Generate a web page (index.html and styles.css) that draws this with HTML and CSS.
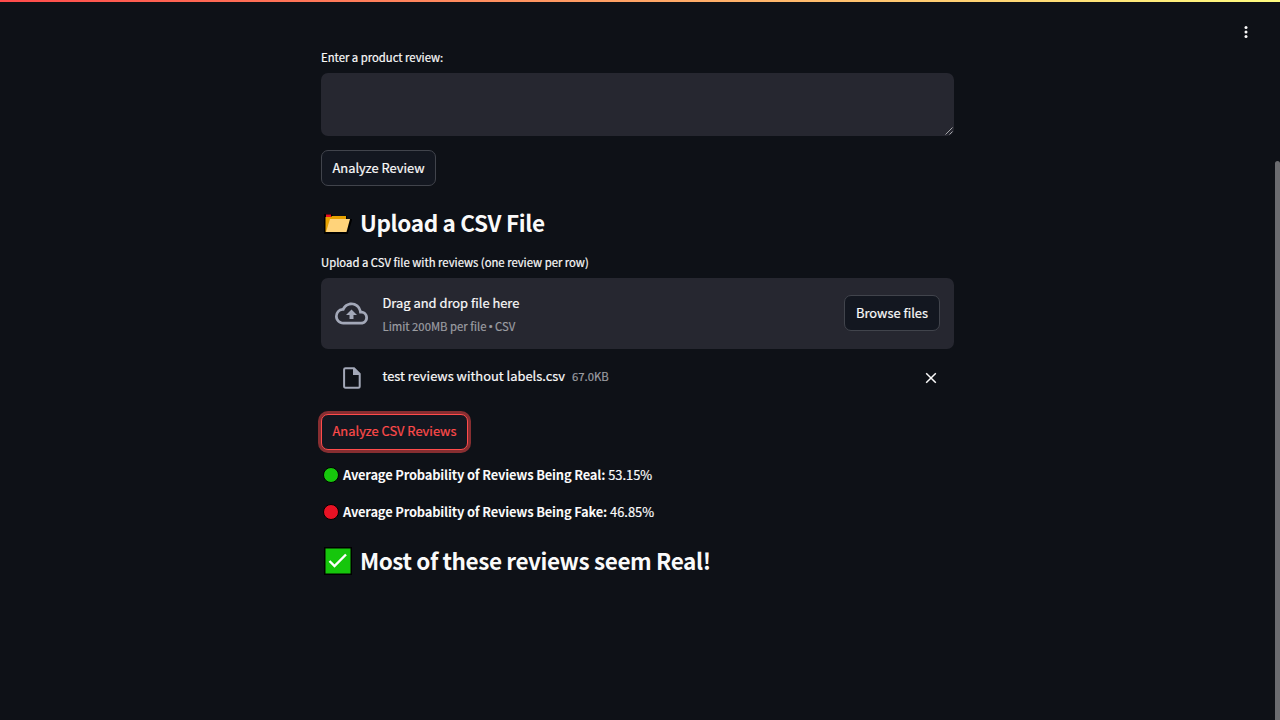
FILE: index.html
```html
<!DOCTYPE html>
<html lang="en">
<head>
<meta charset="utf-8">
<title>Product review analyzer</title>
<link rel="stylesheet" href="styles.css">
</head>
<body>
<div class="decoration"></div>
<svg class="menu" viewBox="0 0 4 12" aria-label="Menu"><circle cx="2" cy="1.6" r="1.5"/><circle cx="2" cy="6" r="1.5"/><circle cx="2" cy="10.4" r="1.5"/></svg>
<div class="scrollbar"></div>
<main class="content">
  <label class="label label-review" for="review"><span>Enter a product review:</span></label>
  <div class="review-box">
    <textarea class="review" id="review"></textarea>
    <svg class="grip" viewBox="0 0 8 8"><path d="M.5 7.500 7.500 .5M4.500 7.500 7.500 4.500"/></svg>
  </div>
  <button class="button button-review"><span>Analyze Review</span></button>
  <h2 class="heading heading-upload">
    <svg class="folder" viewBox="0 0 28 24"><path d="M1 3H7L9 5H22V8H27L23 21H1Z" fill="#000" stroke="#000" stroke-width="2"/><path d="M2 5V2.500H7V5Z" fill="#e81224"/><path d="M1.500 5H7L8 4H22V20H1.500Z" fill="#e8a200"/><path d="M6 7H26L22.500 20H2Z" fill="#ffd37a"/></svg>
    <span>Upload a CSV File</span>
  </h2>
  <div class="label label-upload"><span>Upload a CSV file with reviews (one review per row)</span></div>
  <section class="dropzone">
    <svg class="cloud" viewBox="0 0 24 24"><path d="M19.350 10.040A7.490 7.490 0 0 0 12 4C9.110 4 6.600 5.640 5.350 8.040A5.994 5.994 0 0 0 0 14c0 3.310 2.690 6 6 6h13c2.760 0 5-2.240 5-5 0-2.640-2.050-4.780-4.650-4.960zM19 18H6c-2.210 0-4-1.790-4-4 0-2.050 1.530-3.760 3.560-3.970l1.070-.11.5-.95A5.469 5.469 0 0 1 12 6c2.620 0 4.880 1.860 5.390 4.430l.3 1.500 1.530.11A2.980 2.980 0 0 1 22 15c0 1.650-1.350 3-3 3zM8 13h2.550v3h2.900v-3H16l-4-4z"/></svg>
    <div class="instructions">
      <div class="drag"><span>Drag and drop file here</span></div>
      <div class="limit"><span>Limit 200MB per file <span class="bullet">•</span> CSV</span></div>
    </div>
    <button class="button button-browse"><span>Browse files</span></button>
  </section>
  <div class="file">
    <svg class="file-icon" viewBox="0 0 18 22"><path d="M2.500 1.200H11L16.700 7V19.300Q16.700 20.800 15.200 20.800H2.500Q1.100 20.800 1.100 19.300V2.600Q1.100 1.200 2.500 1.200Z" fill="none" stroke="#a3a8b8" stroke-width="2"/><path d="M10 1H11.500L17 6.700V8H10Z" fill="#a3a8b8"/></svg>
    <div class="file-name"><span>test reviews without labels.csv</span></div>
    <div class="file-size"><span>67.0KB</span></div>
    <svg class="close" viewBox="0 0 12 12"><path d="M1.200 1.200 10.800 10.800M10.800 1.200 1.200 10.800"/></svg>
  </div>
  <button class="button button-csv"><span>Analyze CSV Reviews</span></button>
  <p class="result"><i class="dot dot-real"></i><b>Average Probability of Reviews Being Real:</b><span>53.15%</span></p>
  <p class="result"><i class="dot dot-fake"></i><b>Average Probability of Reviews Being Fake:</b><span>46.85%</span></p>
  <h2 class="heading heading-verdict">
    <svg class="check" viewBox="0 0 28 28"><path d="M0 0H28V28H0Z" fill="#000"/><path d="M1.500 1.500H26.500V26.500H1.500Z" fill="#16c60c"/><path d="M5.500 14 10.500 19 22 7.500" fill="none" stroke="#fff" stroke-width="2.400"/></svg>
    <span>Most of these reviews seem Real!</span>
  </h2>
</main>
</body>
</html>
```
FILE: styles.css
```css
* { box-sizing: border-box; }
body {
  margin: 0;
  height: 720px;
  overflow: hidden;
  background: #0e1117;
  color: #fafafa;
  font-family: "Noto Sans CJK SC", sans-serif;
  font-size: 12.9px;
}
.decoration {
  position: absolute;
  inset: 0 0 auto;
  height: 2px;
  background: linear-gradient(90deg, #ff4b4b, #fffd80);
}
.menu { position: absolute; left: 1244px; top: 26px; width: 4px; height: 12px; fill: #fafafa; }
.scrollbar { position: absolute; left: 1275px; top: 161px; width: 5px; height: 570px; border-radius: 3px; background: #6b6c70; }
.content {
  display: flex;
  flex-direction: column;
  align-items: flex-start;
  width: 633px;
  margin-left: 321px;
  padding-top: 48px;
  white-space: nowrap;
}
.label { display: flex; align-items: center; height: 20px; padding-bottom: 2px; font-size: 11.3px; -webkit-text-stroke: .2px; }
.review-box { position: relative; height: 63px; margin: 5px 0 14px; }
.review {
  display: block;
  width: 633px;
  height: 63px;
  border: 0;
  border-radius: 7px;
  background: #262730;
  color: inherit;
  resize: none;
}
.grip { position: absolute; right: 1px; bottom: 1px; width: 8px; height: 8px; fill: none; stroke: #c4c5c8; stroke-width: .8; }
.button {
  display: flex;
  align-items: center;
  justify-content: center;
  height: 36px;
  padding: 0 0 2px;
  border: 1px solid #41444c;
  border-radius: 7px;
  background: #131720;
  color: #fafafa;
  font: inherit;
  -webkit-text-stroke: .2px;
}
.button-review { width: 115px; }
.heading { display: flex; align-items: center; height: 40px; margin: 0; font-size: 22.5px; font-weight: 700; }
.heading span { margin-top: -3px; }
.heading-upload { margin-top: 18px; letter-spacing: -.36px; }
.heading-upload span { margin-top: -5px; }
.folder { width: 28px; height: 24px; margin: 0 8.500px 0 2.500px; }
.label-upload { margin: 9px 0 5px; }
.dropzone {
  display: flex;
  align-items: center;
  width: 633px;
  height: 71px;
  padding: 0 14px;
  border-radius: 7px;
  background: #262730;
}
.cloud { width: 33px; height: 33px; margin-right: 14.500px; fill: #a3a8b8; }
.instructions { flex: 1; }
.drag { display: flex; align-items: center; height: 24px; -webkit-text-stroke: .2px; }
.limit { display: flex; align-items: center; height: 22px; font-size: 11.3px; color: #9c9da2; -webkit-text-stroke: .2px; }
.bullet { margin: 0 -.7px; font-family: "Open Sans", sans-serif; font-size: 13px; line-height: 1; }
.button-browse { width: 96px; margin-bottom: 1px; }
.file { display: flex; align-items: center; width: 633px; height: 36px; margin: 11px 0 18px; padding: 0 17px 0 22px; }
.file-icon { width: 18px; height: 22px; margin-right: 21.500px; }
.file-name { margin-top: -5px; -webkit-text-stroke: .2px; }
.file-size { margin: -4px 0 0 7px; font-size: 11.3px; color: #9c9da2; -webkit-text-stroke: .2px; }
.close { width: 12px; height: 12px; margin-left: auto; fill: none; stroke: #fafafa; stroke-width: 1.500; }
.button-csv { width: 147px; padding-bottom: 3px; border-color: #ff4b4b; color: #ff4b4b; box-shadow: 0 0 0 3px rgba(255, 75, 75, .5); }
.result { display: flex; align-items: center; height: 22px; margin: 14px 0 1px; }
.result b { margin: -2px 3px 0 0; letter-spacing: -.17px; }
.result span { margin-top: -2px; -webkit-text-stroke: .2px; }
.dot { width: 16px; height: 16px; margin: -1px 4.500px 0 1.500px; border: 1px solid #000; border-radius: 50%; }
.dot-real { background: #16c60c; }
.dot-fake { background: #e81224; }
.heading-verdict { margin-top: 17px; letter-spacing: -.41px; }
.check { width: 28px; height: 28px; margin: 0 8px 0 3px; }
```
